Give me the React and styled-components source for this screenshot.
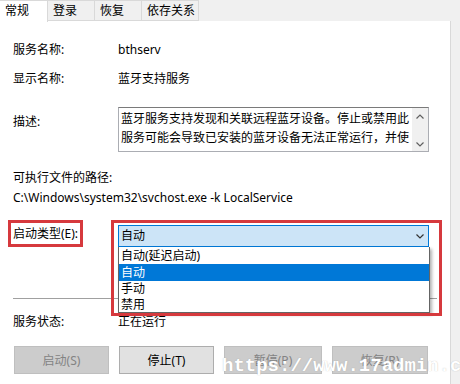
import React from 'react';
import styled, { createGlobalStyle } from 'styled-components';

const Global = createGlobalStyle`
	html, body {
		margin: 0;
		padding: 0;
		background: #f0f0f0;
	}
	body {
		font-family: 'Noto Sans', 'Noto Sans CJK SC', sans-serif;
		font-size: 12px;
		color: #000;
	}
`;

const Window = styled.div`
	position: relative;
	width: 460px;
	height: 384px;
	overflow: hidden;
	background: #f0f0f0;
`;

const TabStrip = styled.div`
	display: flex;
	height: 21px;
	position: relative;
	z-index: 2;
`;

const Tab = styled.div`
	box-sizing: border-box;
	width: ${(p) => p.$w}px;
	height: ${(p) => (p.$active ? 22 : 21)}px;
	padding-left: 5px;
	line-height: 19px;
	background: ${(p) => (p.$active ? '#fff' : '#f0f0f0')};
	border: 1px solid #d9d9d9;
	border-left: ${(p) => (p.$active ? 'none' : '1px solid #d9d9d9')};
	border-bottom: ${(p) => (p.$active ? 'none' : '1px solid #d9d9d9')};
	margin-left: ${(p) => (p.$active ? 0 : -1)}px;
	font-size: 12px;
`;

const Panel = styled.div`
	box-sizing: border-box;
	width: 451px;
	height: 363px;
	background: #fff;
	border-right: 1px solid #d9d9d9;
	padding: 21px 0 0 13px;
`;

const Field = styled.div`
	display: grid;
	grid-template-columns: 105px 1fr;
	align-items: ${(p) => (p.$top ? 'start' : 'center')};
	margin-top: ${(p) => p.$mt || 0}px;
	line-height: 16px;
`;

const Label = styled.div`
	padding-top: ${(p) => p.$pt || 0}px;
`;

const Line = styled.div`
	line-height: 16px;
	margin-top: ${(p) => p.$mt || 0}px;
`;

const TextBox = styled.div`
	box-sizing: border-box;
	width: 311px;
	height: 45px;
	border: 1px solid #abadb3;
	border-top-color: #7a7a7a;
	display: flex;
`;

const TextBody = styled.div`
	flex: 1;
	padding: 1px 0 0 2px;
	line-height: 19px;
	overflow: hidden;
	white-space: nowrap;
`;

const ScrollBar = styled.div`
	width: 16px;
	background: #f0f0f0;
	display: flex;
	flex-direction: column;
	justify-content: space-between;
	align-items: center;
	padding: 6px 0 4px;
`;

const Chevron = ({ up, color = '#606060' }) => (
	<svg width="8" height="5" viewBox="0 0 8 5">
		<path
			d={up ? 'M0.5 4.5 L4 1 L7.5 4.5' : 'M0.5 0.5 L4 4 L7.5 0.5'}
			fill="none"
			stroke={color}
			strokeWidth="1.2"
		/>
	</svg>
);

const StartupRow = styled.div`
	display: flex;
	align-items: flex-start;
	margin-top: 14px;
`;

const Marked = styled.div`
	box-sizing: border-box;
	width: 75px;
	height: 27px;
	margin-left: -5px;
	margin-right: 35px;
	border: 3px solid #d6393d;
	padding-left: 2px;
	line-height: 21px;
	white-space: nowrap;
`;

const ComboWrap = styled.div`
	position: relative;
	margin-top: 5px;
`;

const Combo = styled.div`
	box-sizing: border-box;
	width: 311px;
	height: 22px;
	border: 1px solid #0078d7;
	background: #cce4f7;
	padding: 0 4px 0 2px;
	display: flex;
	align-items: center;
	justify-content: space-between;
	line-height: 20px;
`;

const DropList = styled.div`
	position: absolute;
	top: 22px;
	left: 0;
	box-sizing: border-box;
	width: 312px;
	height: 66px;
	background: #fff;
	border: 1px solid #646464;
	border-top: none;
	box-shadow: 2px 2px 3px rgba(0, 0, 0, 0.3);
	z-index: 3;
	padding-top: 1px;
`;

const Option = styled.div`
	height: ${(p) => (p.$selected ? 17 : 16)}px;
	line-height: ${(p) => (p.$selected ? 17 : 16)}px;
	padding-left: 2px;
	background: ${(p) => (p.$selected ? '#0078d7' : 'transparent')};
	color: ${(p) => (p.$selected ? '#fff' : '#000')};
`;

const RedFrame = styled.div`
	position: absolute;
	left: -7px;
	top: -5px;
	width: 331px;
	height: 96px;
	box-sizing: border-box;
	border: 3px solid #d6393d;
	pointer-events: none;
	z-index: 4;
`;

const Separator = styled.div`
	height: 1px;
	width: 424px;
	background: #a0a0a0;
	margin-top: 51px;
`;

const ButtonRow = styled.div`
	display: flex;
	gap: 10px;
	margin: 16px 0 0 1px;
`;

const Button = styled.div`
	box-sizing: border-box;
	width: ${(p) => p.$w}px;
	height: 28px;
	display: flex;
	align-items: center;
	justify-content: center;
	background: ${(p) => (p.$disabled ? '#cccccc' : '#e1e1e1')};
	border: 1px solid ${(p) => (p.$disabled ? '#bfbfbf' : '#adadad')};
	color: ${(p) => (p.$disabled ? '#838383' : '#000')};
`;

const Watermark = styled.div`
	position: absolute;
	left: 222px;
	top: 355px;
	font-family: 'Liberation Mono', monospace;
	font-weight: bold;
	font-size: 19px;
	color: #fff;
	text-shadow: 0 0 1px rgba(120, 120, 120, 0.5);
	white-space: nowrap;
	z-index: 5;
`;

const App = () => {
	return (
		<Window>
			<Global />
			<TabStrip>
				<Tab $active $w={48}>常规</Tab>
				<Tab $w={48}>登录</Tab>
				<Tab $w={48}>恢复</Tab>
				<Tab $w={58}>依存关系</Tab>
			</TabStrip>
			<Panel>
				<Field>
					<Label>服务名称:</Label>
					<div>bthserv</div>
				</Field>
				<Field $mt={13}>
					<Label>显示名称:</Label>
					<div>蓝牙支持服务</div>
				</Field>
				<Field $top $mt={20}>
					<Label $pt={7}>描述:</Label>
					<TextBox>
						<TextBody>
							蓝牙服务支持发现和关联远程蓝牙设备。停止或禁用此
							<br />
							服务可能会导致已安装的蓝牙设备无法正常运行，并使
						</TextBody>
						<ScrollBar>
							<Chevron up />
							<Chevron />
						</ScrollBar>
					</TextBox>
				</Field>
				<Line $mt={18}>可执行文件的路径:</Line>
				<Line $mt={4}>C:\Windows\system32\svchost.exe -k LocalService</Line>
				<StartupRow>
					<Marked>启动类型(E):</Marked>
					<ComboWrap>
						<Combo>
							<span>自动</span>
							<Chevron color="#333" />
						</Combo>
						<DropList>
							<Option>自动(延迟启动)</Option>
							<Option $selected>自动</Option>
							<Option>手动</Option>
							<Option>禁用</Option>
						</DropList>
						<RedFrame />
					</ComboWrap>
				</StartupRow>
				<Separator />
				<Field $mt={15}>
					<Label>服务状态:</Label>
					<div>正在运行</div>
				</Field>
				<ButtonRow>
					<Button $disabled $w={95}>启动(S)</Button>
					<Button $w={95}>停止(T)</Button>
					<Button $disabled $w={98}>暂停(P)</Button>
					<Button $disabled $w={96}>恢复(R)</Button>
				</ButtonRow>
			</Panel>
			<Watermark>https://www.17admin.c</Watermark>
		</Window>
	);
};

export default App;
